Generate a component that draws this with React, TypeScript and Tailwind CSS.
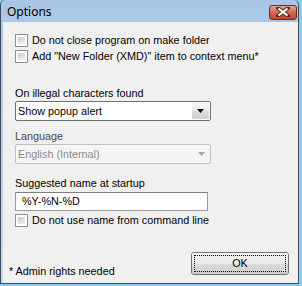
import React from 'react';

const Check = ({ label }: { label: string }) => (
  <div className="flex items-center h-[13px]">
    <div className="w-[13px] h-[13px] border border-[#8e8f8f] bg-white p-[2px] shrink-0">
      <div className="w-full h-full bg-gradient-to-br from-[#cbcbcb] to-[#f6f6f6]" />
    </div>
    <span className="ml-[4px] leading-[13px]">{label}</span>
  </div>
);

const Arrow = ({ color }: { color: string }) => (
  <svg width="7" height="4" viewBox="0 0 7 4">
    <path d="M0 0H7L3.5 4Z" fill={color} />
  </svg>
);

const App = () => {
  return (
    <div className="w-[302px] h-[286px] bg-[#86cdee] overflow-hidden">
      <div
        className="w-[299px] h-[284px] flex flex-col border-l border-r border-b border-[#3d4b5c] rounded-tl-[5px] rounded-tr-[5px] bg-gradient-to-b from-[#aac6e5] to-[#c6d9ef] text-black"
        style={{ fontFamily: '"Liberation Sans", Arial, sans-serif' }}
      >
        {/* Title bar */}
        <div className="h-[22px] flex items-center justify-between pl-[6px] pr-[1px]">
          <span className="text-[12px] mt-[1px]" style={{ fontFamily: '"Noto Sans", "Open Sans", sans-serif' }}>
            Options
          </span>
          <div className="w-[28px] h-[15px] mt-[2px] rounded-[3px] border border-[#6e2a24] bg-gradient-to-b from-[#e4a595] via-[#cf6654] to-[#c04632] flex items-center justify-center">
            <svg width="14" height="10" viewBox="0 0 14 10">
              <path d="M2 1L12 9M12 1L2 9" stroke="#5a2a24" strokeWidth="4" strokeLinecap="square" />
              <path d="M2.5 1.5L11.5 8.5M11.5 1.5L2.5 8.5" stroke="#ffffff" strokeWidth="2.2" />
            </svg>
          </div>
        </div>

        {/* Client area */}
        <div className="flex-1 ml-[2px] bg-[#f0f0f0] text-[10.8px] flex flex-col px-[12px] pt-[12px] pb-[8px]">
          <Check label="Do not close program on make folder" />
          <div className="mt-[3px]">
            <Check label={'Add "New Folder (XMD)" item to context menu*'} />
          </div>

          <div className="mt-[24px] leading-[13px]">On illegal characters found</div>
          <div className="mt-[1px] w-[196px] h-[20px] border border-[#707070] rounded-[2px] bg-white flex items-stretch">
            <div className="flex-1 flex items-center pl-[2px]">Show popup alert</div>
            <div className="w-[17px] flex flex-col m-[1px] ml-0 rounded-[1px] overflow-hidden relative">
              <div className="flex-1 bg-gradient-to-b from-[#f4f4f4] to-[#ebebeb]" />
              <div className="flex-1 bg-gradient-to-b from-[#dcdcdc] to-[#cfcfcf]" />
              <div className="absolute inset-0 flex items-center justify-center">
                <Arrow color="#000" />
              </div>
            </div>
          </div>

          <div className="mt-[9px] leading-[13px] text-[#4a4a4a]">Language</div>
          <div className="mt-[1px] w-[196px] h-[20px] border border-[#c2c2c2] rounded-[2px] bg-[#f5f5f5] flex items-stretch text-[#8a8a8a]">
            <div className="flex-1 flex items-center pl-[2px]">English (Internal)</div>
            <div className="w-[17px] flex items-center justify-center">
              <Arrow color="#a8a8a8" />
            </div>
          </div>

          <div className="mt-[13px] leading-[13px]">Suggested name at startup</div>
          <div className="mt-[2px] w-[193px] h-[19px] border border-[#9a9a9a] border-t-[#7f7f7f] bg-white flex items-center pl-[6px]">
            %Y-%N-%D
          </div>
          <div className="mt-[3px]">
            <Check label="Do not use name from command line" />
          </div>

          <div className="mt-auto flex items-end justify-between">
            <span className="ml-[-6px] mb-[-3px] leading-[13px]">* Admin rights needed</span>
            <div className="w-[98px] h-[23px] mr-[-3px] border border-[#707070] rounded-[3px] flex flex-col overflow-hidden relative">
              <div className="flex-1 bg-gradient-to-b from-[#f3f3f3] to-[#ebebeb]" />
              <div className="flex-1 bg-gradient-to-b from-[#dddddd] to-[#cfcfcf]" />
              <div className="absolute inset-[2px] border border-dotted border-black flex items-center justify-center">
                OK
              </div>
            </div>
          </div>
        </div>
      </div>
    </div>
  );
};

export default App;
